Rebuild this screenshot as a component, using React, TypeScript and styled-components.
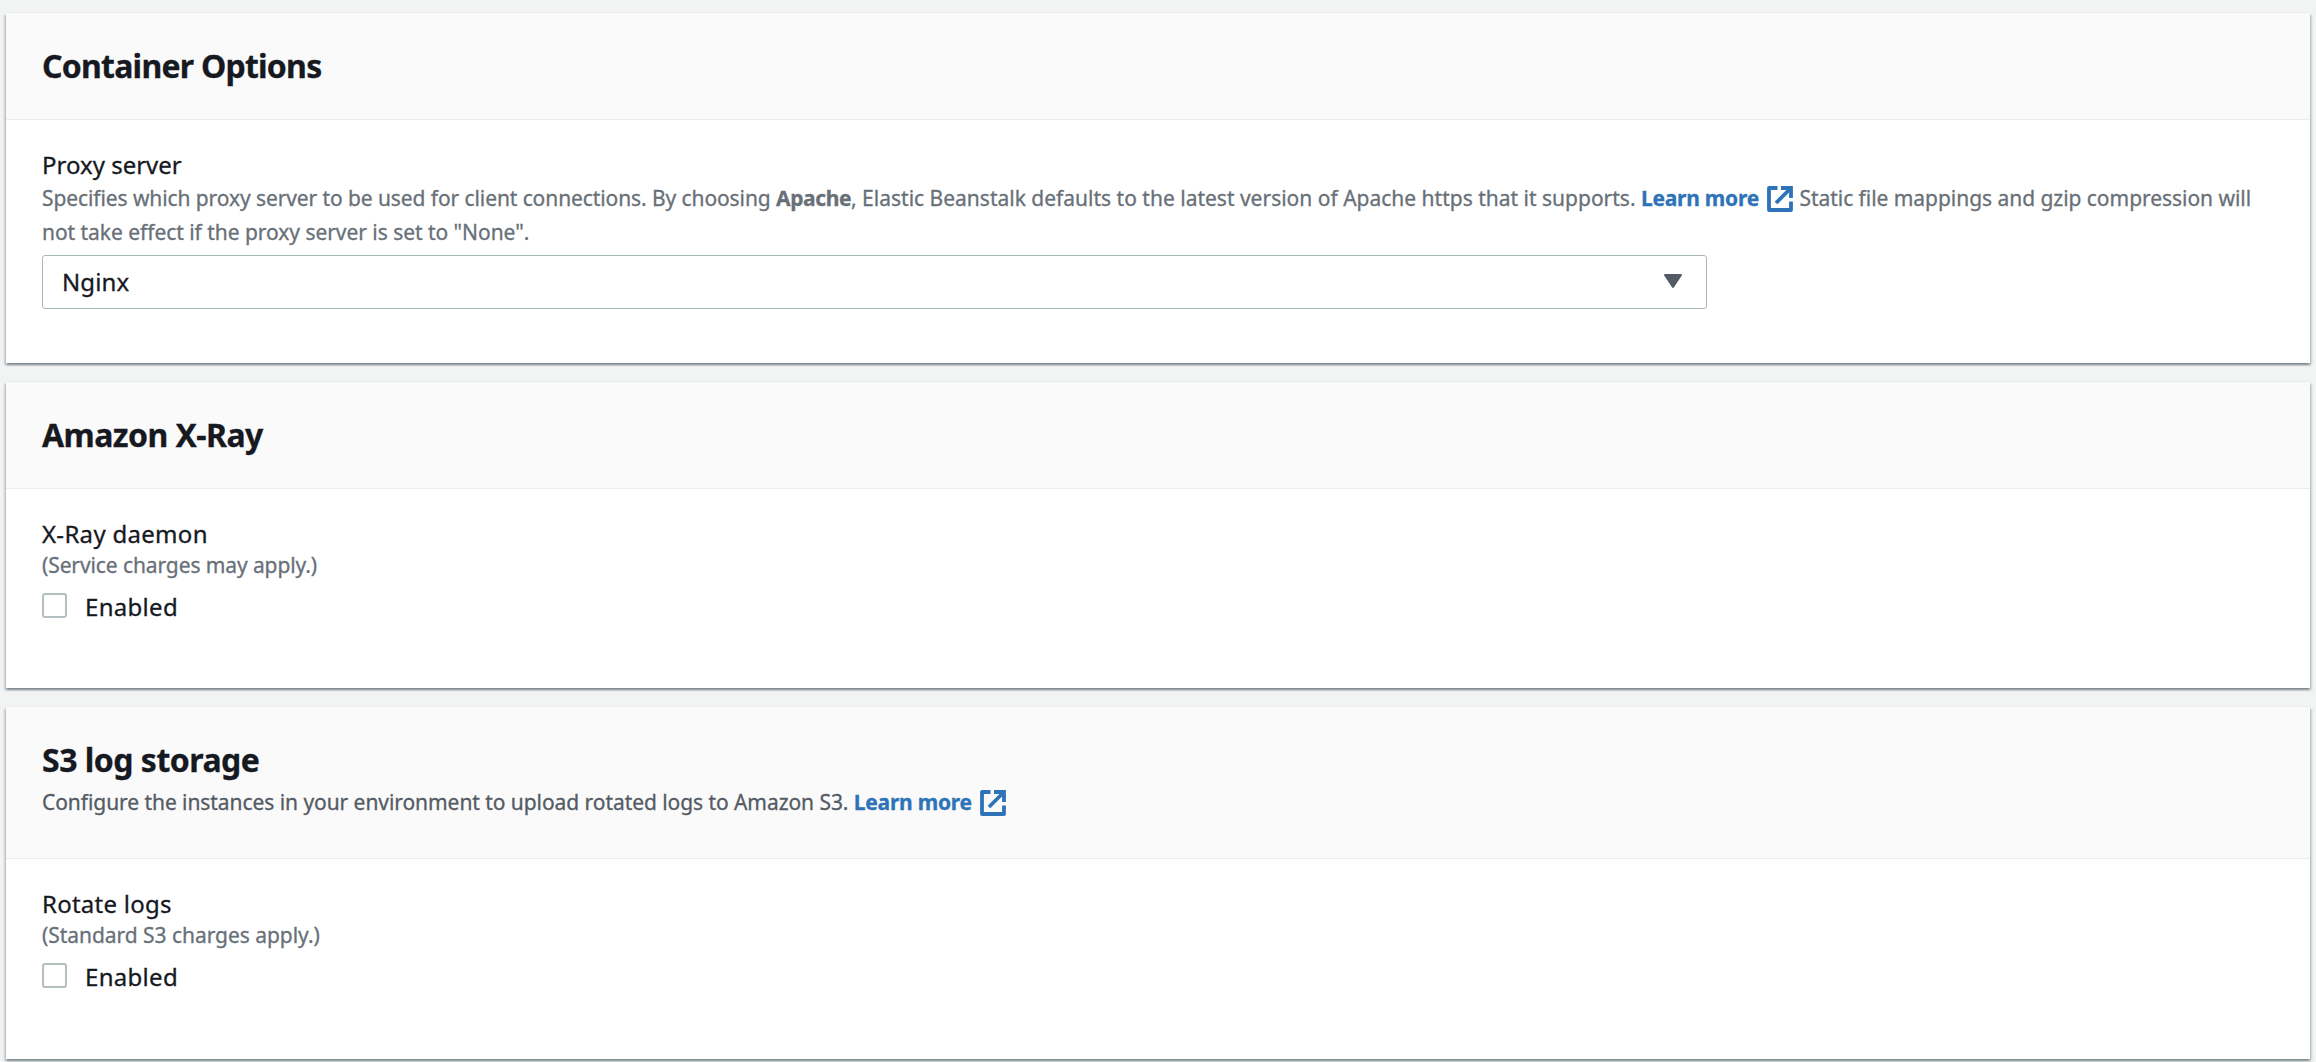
import type { ReactNode } from 'react';
import styled, { createGlobalStyle } from 'styled-components';

const GlobalStyle = createGlobalStyle`
  * {
    box-sizing: border-box;
  }

  body {
    margin: 0;
    background: #f2f4f4;
    color: #16191f;
    font-family: 'Noto Sans', 'Open Sans', sans-serif;
    -webkit-text-stroke: 0.3px;
  }
`;

const Page = styled.main`
  display: flex;
  flex-direction: column;
  gap: 19px;
  height: 1062px;
  padding: 13px 6px 0;
  overflow: hidden;
`;

const Panel = styled.section`
  flex-shrink: 0;
  background: #ffffff;
  box-shadow:
    0 -1px 0 #eaeded,
    0 2px 2px 0 rgba(0, 28, 36, 0.3),
    2px 2px 2px 0 rgba(0, 28, 36, 0.15),
    -2px 2px 2px 0 rgba(0, 28, 36, 0.15);
`;

const PanelHeader = styled.header<{ $tall?: boolean }>`
  padding: 33px 36px ${props => (props.$tall ? 39 : 33)}px;
  background: #fafafa;
  border-bottom: 1px solid #eaeded;
`;

const PanelBody = styled.div<{ $bottom: number }>`
  padding: 28px 36px ${props => props.$bottom}px;
`;

const Title = styled.h2<{ $tracking: number }>`
  margin: 0;
  font-size: 32px;
  font-weight: 700;
  line-height: 40px;
  letter-spacing: ${props => props.$tracking}px;
`;

const Description = styled.p`
  margin: 5px 0 0;
  color: #545b64;
  font-size: 21px;
  line-height: 34px;
  letter-spacing: -0.06px;
`;

const Label = styled.div<{ $tracking?: number }>`
  font-size: 24px;
  line-height: 33px;
  letter-spacing: ${props => props.$tracking ?? 0}px;
`;

const Hint = styled.div<{ $lineHeight?: number; $tracking?: number }>`
  color: #687078;
  font-size: 21px;
  line-height: ${props => props.$lineHeight ?? 30}px;
  letter-spacing: ${props => props.$tracking ?? 0}px;
`;

const Run = styled.span<{ $tracking: number }>`
  letter-spacing: ${props => props.$tracking}px;
`;

const Strong = styled.b`
  letter-spacing: -0.4px;
`;

const Link = styled.a`
  color: #2e73b8;
  font-weight: 700;
  letter-spacing: -0.25px;
  text-decoration: none;
`;

const LinkIcon = styled.svg`
  width: 26px;
  height: 26px;
  margin: -4px 1px -6px 8px;
  vertical-align: 0;
`;

const Select = styled.button`
  display: flex;
  align-items: center;
  justify-content: space-between;
  width: 1665px;
  height: 54px;
  margin-top: 6px;
  padding: 0 23px 2px 19px;
  background: #ffffff;
  border: 1px solid #aab7b8;
  border-radius: 3px;
  color: inherit;
  font: inherit;
  font-size: 24px;
  letter-spacing: 0.1px;
`;

const Caret = styled.svg`
  width: 20px;
  height: 16px;
`;

const CheckRow = styled.label`
  display: flex;
  align-items: flex-start;
  gap: 18px;
  margin-top: 10px;
  font-size: 24px;
  line-height: 34px;
  letter-spacing: 0.3px;
`;

const Checkbox = styled.input`
  appearance: none;
  width: 25px;
  height: 25px;
  margin: 3px 0 0;
  background: #ffffff;
  border: 2px solid #b3bfc0;
  border-radius: 3px;
`;

const LearnMore = () => (
  <Link href="#">
    Learn more
    <LinkIcon viewBox="0 0 26 26" fill="none" stroke="currentColor" strokeWidth="3.8">
      <path d="M10.5 2H2v22h22v-8.5" strokeLinejoin="round" />
      <path d="M14 2h10v10" />
      <path d="M24 2 9 17" />
    </LinkIcon>
  </Link>
);

interface IPanel {
  title: string;
  tracking: number;
  bottom: number;
  description?: ReactNode;
  children: ReactNode;
}

const OptionsPanel = ({ title, tracking, bottom, description, children }: IPanel) => (
  <Panel>
    <PanelHeader $tall={!!description}>
      <Title $tracking={tracking}>{title}</Title>
      {description && <Description>{description}</Description>}
    </PanelHeader>
    <PanelBody $bottom={bottom}>{children}</PanelBody>
  </Panel>
);

const EnabledOption = () => (
  <CheckRow>
    <Checkbox type="checkbox" />
    Enabled
  </CheckRow>
);

const App = () => (
  <>
    <GlobalStyle />
    <Page>
      <OptionsPanel title="Container Options" tracking={-0.76} bottom={54}>
        <Label>Proxy server</Label>
        <Hint $lineHeight={34}>
          <Run $tracking={-0.09}>
            Specifies which proxy server to be used for client connections. By choosing{' '}
          </Run>
          <Strong>Apache</Strong>, Elastic Beanstalk defaults to the latest version of Apache https
          that it supports. <LearnMore />{' '}
          <Run $tracking={-0.04}>
            Static file mappings and gzip compression will not take effect if the proxy server is
            set to "None".
          </Run>
        </Hint>
        <Select type="button">
          Nginx
          <Caret viewBox="0 0 20 16" fill="#545b64" stroke="#545b64">
            <path d="M2 2h16l-8 12z" strokeWidth="2" strokeLinejoin="round" />
          </Caret>
        </Select>
      </OptionsPanel>

      <OptionsPanel title="Amazon X-Ray" tracking={-0.56} bottom={64}>
        <Label $tracking={0.3}>X-Ray daemon</Label>
        <Hint $tracking={-0.1}>(Service charges may apply.)</Hint>
        <EnabledOption />
      </OptionsPanel>

      <OptionsPanel
        title="S3 log storage"
        tracking={-0.5}
        bottom={65}
        description={
          <>
            Configure the instances in your environment to upload rotated logs to Amazon S3.{' '}
            <LearnMore />
          </>
        }
      >
        <Label $tracking={0.25}>Rotate logs</Label>
        <Hint $tracking={-0.04}>(Standard S3 charges apply.)</Hint>
        <EnabledOption />
      </OptionsPanel>
    </Page>
  </>
);

export default App;
